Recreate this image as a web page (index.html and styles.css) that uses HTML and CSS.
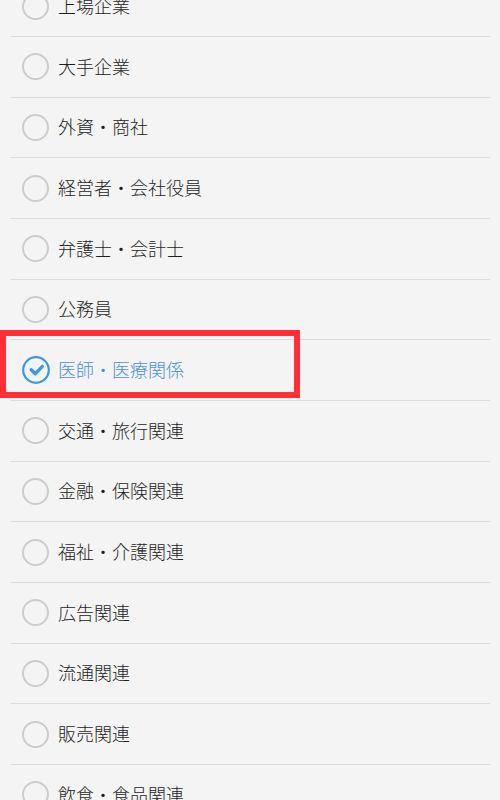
FILE: index.html
```html
<!DOCTYPE html>
<html lang="ja">
<head>
<meta charset="utf-8">
<link rel="stylesheet" href="styles.css">
</head>
<body>
<ul class="list">
  <li class="row"><span class="radio"></span><span class="label">上場企業</span></li>
  <li class="row"><span class="radio"></span><span class="label">大手企業</span></li>
  <li class="row"><span class="radio"></span><span class="label">外資・商社</span></li>
  <li class="row"><span class="radio"></span><span class="label">経営者・会社役員</span></li>
  <li class="row"><span class="radio"></span><span class="label">弁護士・会計士</span></li>
  <li class="row"><span class="radio"></span><span class="label">公務員</span></li>
  <li class="row selected">
    <svg class="check" viewBox="0 0 28 28" width="28" height="28">
      <circle cx="14" cy="14" r="12.8" fill="none" stroke="#3a97e8" stroke-width="2.2"/>
      <path d="M9.2 13.8 L13.2 17.7 L20.4 10.4" fill="none" stroke="#3a97e8" stroke-width="3.4" stroke-linecap="round" stroke-linejoin="round"/>
    </svg>
    <span class="label">医師・医療関係</span>
    <span class="highlight"></span>
  </li>
  <li class="row"><span class="radio"></span><span class="label">交通・旅行関連</span></li>
  <li class="row"><span class="radio"></span><span class="label">金融・保険関連</span></li>
  <li class="row"><span class="radio"></span><span class="label">福祉・介護関連</span></li>
  <li class="row"><span class="radio"></span><span class="label">広告関連</span></li>
  <li class="row"><span class="radio"></span><span class="label">流通関連</span></li>
  <li class="row"><span class="radio"></span><span class="label">販売関連</span></li>
  <li class="row"><span class="radio"></span><span class="label">飲食・食品関連</span></li>
</ul>
</body>
</html>
```
FILE: styles.css
```css
html, body {
  margin: 0;
  padding: 0;
  background: #f4f4f4;
  overflow: hidden;
}
body {
  width: 500px;
  height: 800px;
  font-family: "Noto Sans CJK JP", "Noto Sans", sans-serif;
}
.list {
  list-style: none;
  margin: -23.67px 10px 0 10px;
  padding: 0;
}
.row {
  position: relative;
  display: flex;
  align-items: center;
  height: 59.67px;
  border-bottom: 1px solid #dcdcdc;
  padding-left: 12px;
  box-sizing: content-box;
}
.radio {
  width: 23px;
  height: 23px;
  border: 2px solid #cccccc;
  border-radius: 50%;
  flex: none;
  margin-right: 9px;
}
.check {
  flex: none;
  margin-left: -0.5px;
  margin-right: 8.5px;
  display: block;
}
.label {
  font-size: 18px;
  font-weight: 300;
  color: #1e1e1e;
  line-height: 1;
  letter-spacing: 0;
  position: relative;
  top: -1px;
}
.selected .label {
  color: #4a90d8;
}
.highlight {
  position: absolute;
  left: -10px;
  top: -10px;
  width: 300px;
  height: 68px;
  box-sizing: border-box;
  border: 6px solid #ff2f33;
  pointer-events: none;
}
```
